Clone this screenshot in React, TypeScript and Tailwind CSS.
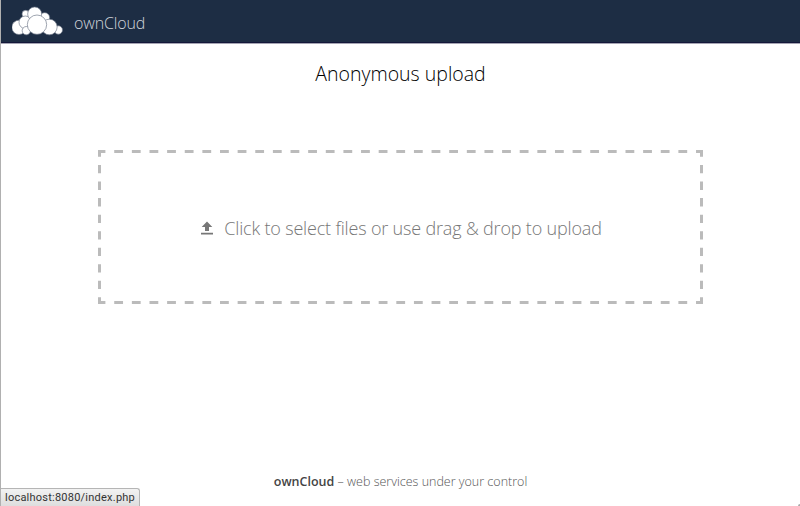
import React from "react";

const clouds = [
  [77, 42, 11],
  [134, 53, 15],
  [57, 82, 21.5],
  [76, 67, 19],
  [104, 42, 21],
  [79, 92, 12.5],
  [175, 90, 12.5],
  [148, 81, 23.5],
  [111, 74, 29],
];

function Logo() {
  return (
    <svg className="ml-[11px] h-[30px] w-[52px] shrink-0" viewBox="36 18 156 90" aria-hidden="true">
      {clouds.map(([x, y, r]) => (
        <circle key={`${x}-${y}`} cx={x} cy={y} r={r} fill="#fff" stroke="#70798a" strokeWidth="2" />
      ))}
    </svg>
  );
}

function DashedOutline() {
  return (
    <svg
      className="pointer-events-none absolute inset-0 h-[154px] w-[605px]"
      viewBox="0 0 605 154"
      fill="none"
      stroke="#bbb"
      strokeWidth="3"
      aria-hidden="true"
    >
      <path d="M0 1.5H605M0 152.5H605" strokeDasharray="8.8 8.83" strokeDashoffset="1.4" />
      <path d="M1.5 0V154M603.5 0V154" strokeDasharray="8.3 8.24" strokeDashoffset="1.5" />
    </svg>
  );
}

export default function App() {
  return (
    <div className="relative flex h-[506px] w-[800px] flex-col overflow-hidden border-l border-[#b0b0b0] bg-white font-['Open_Sans',sans-serif]">
      <header className="flex h-[44px] shrink-0 items-start border-b border-[#a5a5b3] bg-[#1d2d44] pt-[6px] shadow-[inset_0_-1px_0_#14183a]">
        <Logo />
        <span className="ml-[10px] mt-[5px] text-[16px] leading-[24px] font-light tracking-[-0.15px] text-[#d0d4da]">ownCloud</span>
      </header>
      <main className="flex flex-col items-center">
        <h1 className="mt-[16px] text-[19.5px] leading-[28px] font-light text-black">Anonymous upload</h1>
        <button className="relative mt-[62px] flex h-[154px] w-[605px] items-center justify-center pt-[2px] pl-[2px] text-[#777]">
          <DashedOutline />
          <svg className="mr-[11px] h-[14px] w-[12px]" viewBox="0 0 12 14" fill="#777" aria-hidden="true">
            <path d="M6 0.5L11.3 6H8V10H4V6H0.7ZM0 11.8H12V13.5H0Z" />
          </svg>
          <span className="text-[18px] leading-[26px] font-light tracking-[-0.175px] whitespace-nowrap">
            Click to select files or use drag &amp; drop to upload
          </span>
        </button>
      </main>
      <footer className="mt-auto pb-[14px] text-center text-[12.5px] leading-[20px] font-light text-[#555]">
        <b className="font-semibold text-[#444]">ownCloud</b> – web services under your control
      </footer>
      <div className="absolute bottom-0 -left-px h-[56px] w-px bg-[#666]" />
      <div className="absolute right-0 bottom-0 size-[2px] rounded-tl-[2px] bg-[#aaa]" />
      <div className="absolute bottom-0 left-0 flex h-[18px] w-[139px] items-center rounded-tr-[3px] border-t border-r border-[#b5b5b5] bg-linear-to-b from-[#f2f2f2] to-[#dedede] pt-px pl-[4px] font-['Roboto',sans-serif] text-[11px] tracking-[0.23px] text-[#333]">
        localhost:8080/index.php
      </div>
    </div>
  );
}
